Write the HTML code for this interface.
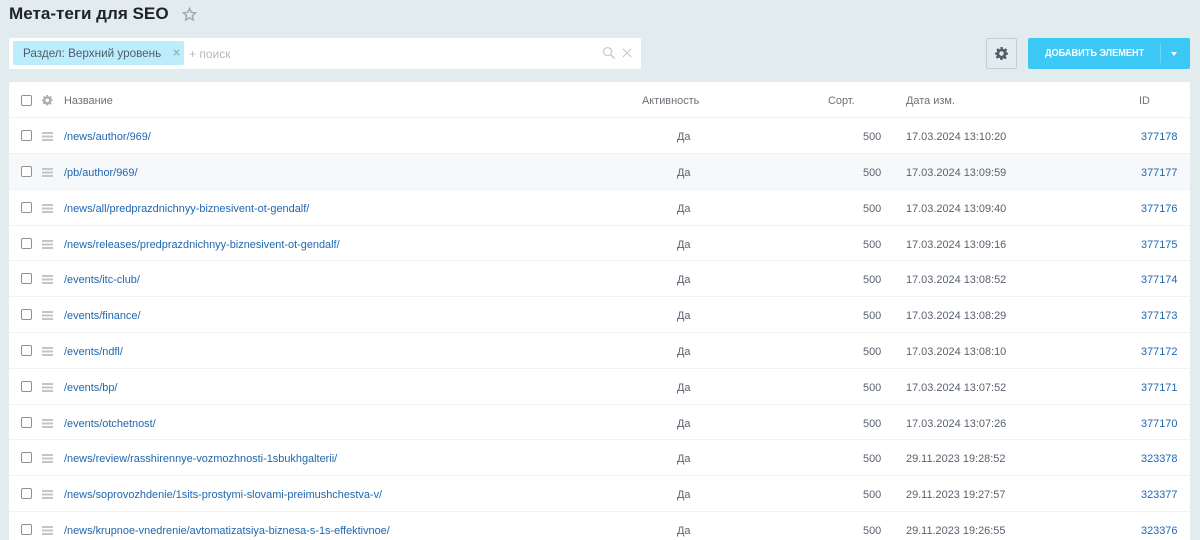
<!DOCTYPE html>
<html lang="ru"><head><meta charset="utf-8"><title>Мета-теги для SEO</title>
<style>
*{box-sizing:border-box}
html,body{margin:0;padding:0;background:#e2ebee}
body{width:1200px;height:540px;overflow:hidden;position:relative;background:#e2ebee;font:10.93px/16px "Liberation Sans",Arial,sans-serif;color:#5a626e}
#w{position:absolute;left:0;top:0;width:1200px;height:540px;overflow:hidden;filter:blur(.3px)}
.a{position:absolute;white-space:nowrap}
h1{position:absolute;left:9px;top:1.500px;margin:0;font:bold 17.07px/24px "Liberation Sans",sans-serif;color:#1f2329;white-space:nowrap}
.filter{position:absolute;left:9px;top:38px;width:632px;height:31px;background:#fff;border-radius:2px}
.tag{position:absolute;left:4px;top:3px;width:171px;height:24px;background:#bcedfc;border-radius:2px;font-size:11.7px;line-height:25px;padding-left:10px;color:#535c69;white-space:nowrap}
.gear{position:absolute;left:986px;top:38px;width:31px;height:31px;border:1px solid #c6cdd3;border-radius:2px;background:#e2ebee}
.btn{position:absolute;left:1028px;top:38px;width:162px;height:31px;background:#3bc8f5;border-radius:2px;color:#fff;font:bold 10.2px/31px "Liberation Sans",sans-serif;white-space:nowrap}
.btn span{position:absolute;left:17px;top:0;transform:scaleX(.9);transform-origin:0 50%}
.btn i{position:absolute;left:132px;top:6px;width:1px;height:19px;background:#6dd6f8}
.btn b{position:absolute;left:143px;top:14px;border:3.5px solid transparent;border-top:4px solid #fff;border-bottom:0}
.tbl{position:absolute;left:9px;top:82px;width:1181px;height:458px;background:#fff}
.r{position:absolute;left:0;width:1181px;height:36px;border-top:1px solid #f0f2f4}
.r.h{background:#f6f8f9}
.c{position:absolute;left:12px;top:12px;width:11px;height:11px;border:1.4px solid #8d9095;border-radius:2px;background:#fff}
.m{position:absolute;left:33px;top:14px;width:11px;height:9px;background:linear-gradient(#c2c5c9 0 2px,transparent 2px 3.500px,#c2c5c9 3.500px 5.500px,transparent 5.500px 7px,#c2c5c9 7px 9px)}
.n,.y,.s,.d,.i{position:absolute;top:11px;white-space:nowrap}
.n{left:55px;color:#2067b0}
.y{left:668px}
.s{left:854px}
.d{left:897px}
.i{left:1132px;color:#2067b0}
.th{position:absolute;top:11px;color:#6b7178;white-space:nowrap}
</style></head><body><div id="w">
<h1>Мета-теги для SEO</h1>
<svg class="a" style="left:182px;top:7px" width="15" height="15" viewBox="0 0 16 16"><path d="M8 1.600l1.900 4.100 4.500.5-3.300 3.100.9 4.500L8 11.600l-4 2.200.9-4.500L1.600 6.200l4.500-.5z" fill="none" stroke="#a3a9b1" stroke-width="1.600"/></svg>
<div class="filter">
<div class="tag">Раздел: Верхний уровень</div>
<svg class="a" style="left:164px;top:11px" width="7" height="7" viewBox="0 0 7 7"><path d="M.8.8l5.400 5.400M6.200.8L.8 6.200" stroke="#a9b0b6" stroke-width="1.400"/></svg>
<div class="a" style="left:180px;top:8px;color:#b5babf;font-size:12px">+ поиск</div>
<svg class="a" style="left:593px;top:8px" width="14" height="14" viewBox="0 0 14 14"><circle cx="5.600" cy="5.600" r="4" fill="none" stroke="#c9cdd1" stroke-width="1.300"/><path d="M8.600 8.600l4 4" stroke="#c9cdd1" stroke-width="1.600"/></svg>
<svg class="a" style="left:613px;top:10px" width="10" height="10" viewBox="0 0 10 10"><path d="M.8.8l8.400 8.400M9.200.8L.8 9.200" stroke="#c9cdd1" stroke-width="1.200"/></svg>
</div>
<div class="gear"><svg class="a" style="left:8px;top:8px" width="13" height="13" viewBox="0 0 24 24"><path fill="#535c69" fill-rule="evenodd" d="M10 0h4l.7 3.400 2.200.9 2.900-1.900 2.800 2.800-1.900 2.900.9 2.200L24 10.500v3.500l-3.400.7-.9 2.200 1.900 2.900-2.800 2.800-2.900-1.900-2.200.9L14 24h-4l-.7-3.400-2.200-.9-2.900 1.900-2.800-2.800 1.900-2.900-.9-2.200L0 14v-3.500l3.400-.7.9-2.200L2.400 5.200l2.800-2.800 2.900 1.900 2.200-.9zM12 7.900a4.200 4.200 0 1 0 0 8.400 4.200 4.200 0 0 0 0-8.400z"/></svg></div>
<div class="btn"><span>ДОБАВИТЬ ЭЛЕМЕНТ</span><i></i><b></b></div>
<div class="tbl">
<div style="position:absolute;left:0;top:0;width:1181px;height:35px"><span class="c" style="top:13px"></span>
<svg class="a" style="left:33px;top:13px" width="10.500" height="10.500" viewBox="0 0 24 24"><path fill="#a8adb2" fill-rule="evenodd" d="M10 0h4l.7 3.400 2.200.9 2.900-1.900 2.800 2.800-1.900 2.900.9 2.200L24 10.500v3.500l-3.400.7-.9 2.200 1.900 2.900-2.800 2.800-2.900-1.900-2.200.9L14 24h-4l-.7-3.400-2.200-.9-2.900 1.900-2.800-2.800 1.900-2.900-.9-2.200L0 14v-3.500l3.400-.7.9-2.200L2.400 5.200l2.800-2.800 2.900 1.900 2.200-.9zM12 7.900a4.200 4.200 0 1 0 0 8.400 4.200 4.200 0 0 0 0-8.400z"/></svg>
<span class="th" style="left:55px">Название</span><span class="th" style="left:633px">Активность</span><span class="th" style="left:819px">Сорт.</span><span class="th" style="left:897px">Дата изм.</span><span class="th" style="left:1130px">ID</span></div>
<div class="r" style="top:35px"><span class="c"></span><span class="m"></span><span class="n">/news/author/969/</span><span class="y">Да</span><span class="s">500</span><span class="d">17.03.2024 13:10:20</span><span class="i">377178</span></div>
<div class="r h" style="top:71px"><span class="c"></span><span class="m"></span><span class="n">/pb/author/969/</span><span class="y">Да</span><span class="s">500</span><span class="d">17.03.2024 13:09:59</span><span class="i">377177</span></div>
<div class="r" style="top:107px"><span class="c"></span><span class="m"></span><span class="n">/news/all/predprazdnichnyy-biznesivent-ot-gendalf/</span><span class="y">Да</span><span class="s">500</span><span class="d">17.03.2024 13:09:40</span><span class="i">377176</span></div>
<div class="r" style="top:143px"><span class="c"></span><span class="m"></span><span class="n">/news/releases/predprazdnichnyy-biznesivent-ot-gendalf/</span><span class="y">Да</span><span class="s">500</span><span class="d">17.03.2024 13:09:16</span><span class="i">377175</span></div>
<div class="r" style="top:178px"><span class="c"></span><span class="m"></span><span class="n">/events/itc-club/</span><span class="y">Да</span><span class="s">500</span><span class="d">17.03.2024 13:08:52</span><span class="i">377174</span></div>
<div class="r" style="top:214px"><span class="c"></span><span class="m"></span><span class="n">/events/finance/</span><span class="y">Да</span><span class="s">500</span><span class="d">17.03.2024 13:08:29</span><span class="i">377173</span></div>
<div class="r" style="top:250px"><span class="c"></span><span class="m"></span><span class="n">/events/ndfl/</span><span class="y">Да</span><span class="s">500</span><span class="d">17.03.2024 13:08:10</span><span class="i">377172</span></div>
<div class="r" style="top:286px"><span class="c"></span><span class="m"></span><span class="n">/events/bp/</span><span class="y">Да</span><span class="s">500</span><span class="d">17.03.2024 13:07:52</span><span class="i">377171</span></div>
<div class="r" style="top:322px"><span class="c"></span><span class="m"></span><span class="n">/events/otchetnost/</span><span class="y">Да</span><span class="s">500</span><span class="d">17.03.2024 13:07:26</span><span class="i">377170</span></div>
<div class="r" style="top:357px"><span class="c"></span><span class="m"></span><span class="n">/news/review/rasshirennye-vozmozhnosti-1sbukhgalterii/</span><span class="y">Да</span><span class="s">500</span><span class="d">29.11.2023 19:28:52</span><span class="i">323378</span></div>
<div class="r" style="top:393px"><span class="c"></span><span class="m"></span><span class="n">/news/soprovozhdenie/1sits-prostymi-slovami-preimushchestva-v/</span><span class="y">Да</span><span class="s">500</span><span class="d">29.11.2023 19:27:57</span><span class="i">323377</span></div>
<div class="r" style="top:429px"><span class="c"></span><span class="m"></span><span class="n">/news/krupnoe-vnedrenie/avtomatizatsiya-biznesa-s-1s-effektivnoe/</span><span class="y">Да</span><span class="s">500</span><span class="d">29.11.2023 19:26:55</span><span class="i">323376</span></div>
</div>
</div></body></html>
